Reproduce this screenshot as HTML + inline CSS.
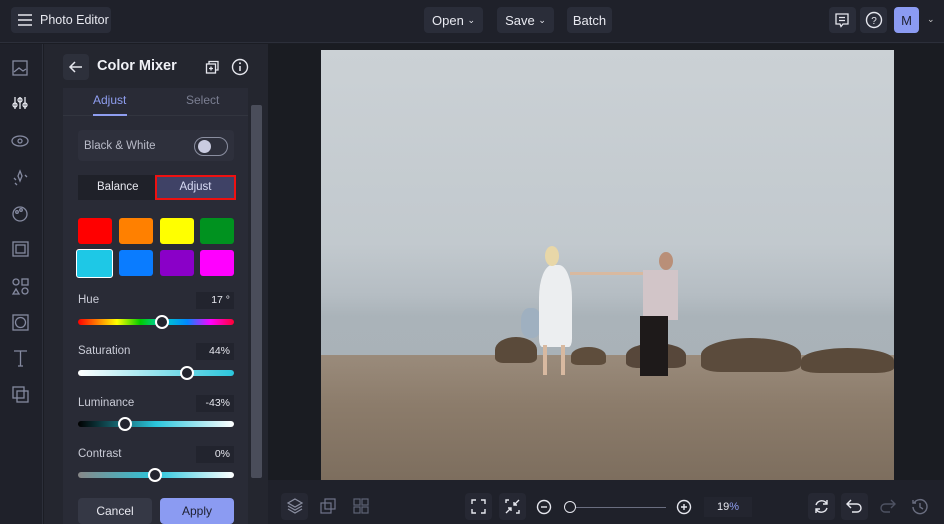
<!DOCTYPE html>
<html><head><style>
*{box-sizing:border-box;margin:0;padding:0}
body{width:944px;height:524px;overflow:hidden;background:#1b1d24;font-family:"Liberation Sans",sans-serif;color:#e6e7ee;position:relative}
.a{position:absolute}
.btn{position:absolute;background:#2a2d39;border-radius:4px;font-size:13px;color:#e8e9f0;display:flex;align-items:center;justify-content:center;white-space:nowrap}
.lbl{position:absolute;font-size:11.5px;color:#c9cbd6}
.val{position:absolute;left:196px;width:38px;height:17px;background:#22242e;font-size:10.5px;color:#e6e7ee;text-align:right;padding-right:4px;line-height:17px}
.sl{position:absolute;left:78px;width:156px;height:6px;border-radius:3px}
.th{position:absolute;width:14px;height:14px;border-radius:50%;background:#23252f;border:2px solid #fff}
.sw{position:absolute;width:34px;height:26px;border-radius:3px}
.rk{position:absolute;background:#5a4a3a;border-radius:50% 50% 20% 20%}
svg{position:absolute}
</style></head><body>
<!-- top bar -->
<div class="a" style="left:0;top:0;width:944px;height:43px;background:#1f212a;border-bottom:1px solid #2c2f3a"></div>
<div class="btn" style="left:11px;top:7px;width:100px;height:26px;justify-content:flex-start;padding-left:29px;font-size:12.5px">Photo Editor</div>
<svg style="left:17px;top:13px" width="16" height="14"><path d="M1 2H15M1 7H15M1 12H15" stroke="#e6e7ee" stroke-width="1.6"/></svg>
<div class="btn" style="left:424px;top:7px;width:59px;height:26px">Open&nbsp;<span style="font-size:9px">&#8964;</span></div>
<div class="btn" style="left:497px;top:7px;width:57px;height:26px">Save&nbsp;<span style="font-size:9px">&#8964;</span></div>
<div class="btn" style="left:567px;top:7px;width:45px;height:26px">Batch</div>
<div class="btn" style="left:829px;top:7px;width:27px;height:26px"></div>
<svg style="left:835px;top:13px" width="14" height="15"><path d="M1 1H13V11H8L6 13.5L5 11H1Z M4 4.5H10M4 7.5H10" fill="none" stroke="#e6e7ee" stroke-width="1.3"/></svg>
<div class="btn" style="left:860px;top:7px;width:27px;height:26px"></div>
<svg style="left:865px;top:11px" width="18" height="18"><circle cx="9" cy="9" r="7.5" fill="none" stroke="#e6e7ee" stroke-width="1.4"/><text x="9" y="13" font-size="10" text-anchor="middle" fill="#e6e7ee" font-family="Liberation Sans">?</text></svg>
<div class="btn" style="left:894px;top:7px;width:25px;height:26px;background:#8b9bf2;color:#1e2030;font-size:13px">M</div>
<div class="a" style="left:927px;top:14px;font-size:9px;color:#ccc">&#8964;</div>
<!-- left rail -->
<div class="a" style="left:0;top:44px;width:43px;height:480px;background:#1f212a;border-right:1px solid #2c2f3a"></div>
<svg style="left:11px;top:59px" width="20" height="350" fill="none" stroke="#858aa0" stroke-width="1.3">
<rect x="2" y="2" width="14" height="14"/><path d="M3 13L8 9L12 12L15 10"/>
<path d="M4 38V50M9 38V50M14 38V50" stroke="#e6e7ee"/><circle cx="4" cy="46" r="2" stroke="#e6e7ee"/><circle cx="9" cy="41" r="2" stroke="#e6e7ee"/><circle cx="14" cy="46" r="2" stroke="#e6e7ee"/>
<ellipse cx="9" cy="82" rx="8" ry="5"/><circle cx="9" cy="82" r="2"/>
<path d="M9 112L11 117L9 122L7 117Z M3 119L5 121 M14 116L16 118 M4 124L6 126"/>
<circle cx="9" cy="155" r="7"/><circle cx="6" cy="153" r="1.3"/><circle cx="10" cy="151" r="1.3"/>
<rect x="2" y="183" width="15" height="14"/><rect x="5" y="186" width="9" height="8"/>
<circle cx="5" cy="223" r="3"/><rect x="11" y="220" width="6" height="6"/><path d="M2 235L5 230L8 235Z"/><circle cx="14" cy="232" r="3"/>
<rect x="2" y="256" width="15" height="15"/><circle cx="9.5" cy="263.5" r="5"/>
<path d="M3 292H16M9.5 292V307M7 307H12"/>
<rect x="2" y="328" width="11" height="11"/><rect x="6" y="332" width="11" height="11"/>
</svg>
<!-- panel -->
<div class="a" style="left:44px;top:44px;width:224px;height:480px;background:#24262f"></div>
<div class="btn" style="left:63px;top:54px;width:26px;height:26px;background:#2d303b"></div>
<svg style="left:68px;top:60px" width="16" height="14"><path d="M14 7H2M7 2L2 7L7 12" fill="none" stroke="#e6e7ee" stroke-width="1.5"/></svg>
<div class="a" style="left:97px;top:58px;font-size:14.5px;font-weight:bold;color:#f0f1f6">Color Mixer</div>
<svg style="left:205px;top:59px" width="16" height="16" fill="none" stroke="#e6e7ee" stroke-width="1.3"><rect x="1.5" y="5" width="9" height="9"/><path d="M4 5V2.5H13V11H10.5"/><path d="M6 7.5V11.5M4 9.5H8"/></svg>
<svg style="left:231px;top:58px" width="18" height="18"><circle cx="9" cy="9" r="7.5" fill="none" stroke="#e6e7ee" stroke-width="1.4"/><path d="M9 8V13" stroke="#e6e7ee" stroke-width="1.5"/><circle cx="9" cy="5.3" r="1" fill="#e6e7ee"/></svg>
<div class="a" style="left:63px;top:88px;width:185px;height:436px;background:#292b36"></div>
<div class="a" style="left:63px;top:115px;width:185px;height:1px;background:#32353f"></div>
<div class="a" style="left:93px;top:93px;font-size:12px;color:#8f9ef0">Adjust</div>
<div class="a" style="left:93px;top:114px;width:34px;height:2px;background:#8f9ef0"></div>
<div class="a" style="left:186px;top:93px;font-size:12px;color:#7b7f92">Select</div>
<div class="a" style="left:78px;top:130px;width:156px;height:31px;background:#2e303c;border-radius:4px"></div>
<div class="a" style="left:84px;top:140px;font-size:11.5px;color:#b9bbc8">Black &amp; White</div>
<div class="a" style="left:194px;top:137px;width:34px;height:19px;border:1.5px solid #8a8ea0;border-radius:10px"></div>
<div class="a" style="left:198px;top:140px;width:13px;height:13px;background:#c9cbe0;border-radius:50%"></div>
<div class="a" style="left:78px;top:175px;width:158px;height:25px;background:#1f2129"></div>
<div class="a" style="left:97px;top:181px;font-size:11.5px;color:#e6e7ee">Balance</div>
<div class="a" style="left:155px;top:175px;width:81px;height:25px;background:#3f4266;border:2.5px solid #e11;font-size:11.5px;color:#d8dbf5;text-align:center;line-height:20px">Adjust</div>
<div class="sw" style="left:78px;top:218px;background:#f00"></div>
<div class="sw" style="left:119px;top:218px;background:#ff8000"></div>
<div class="sw" style="left:160px;top:218px;background:#ff0"></div>
<div class="sw" style="left:200px;top:218px;background:#00921f"></div>
<div class="sw" style="left:76px;top:249px;width:37px;height:29px;background:#1ec8e6;border:1px solid #fff"></div>
<div class="sw" style="left:119px;top:250px;background:#0a7cff"></div>
<div class="sw" style="left:160px;top:250px;background:#8a00c8"></div>
<div class="sw" style="left:200px;top:250px;background:#f0f"></div>
<div class="lbl" style="left:78px;top:294px">Hue</div><div class="val" style="top:292px">17 °</div>
<div class="sl" style="top:319px;background:linear-gradient(90deg,#f00,#ff0 25%,#0c0 40%,#0cc 55%,#08f 70%,#f0f 85%,#f03)"></div>
<div class="th" style="left:155px;top:315px"></div>
<div class="lbl" style="left:78px;top:345px">Saturation</div><div class="val" style="top:343px">44%</div>
<div class="sl" style="top:370px;background:linear-gradient(90deg,#fff,#2bc6dc)"></div>
<div class="th" style="left:180px;top:366px"></div>
<div class="lbl" style="left:78px;top:397px">Luminance</div><div class="val" style="top:395px">-43%</div>
<div class="sl" style="top:421px;background:linear-gradient(90deg,#000,#2bc6dc 50%,#fff)"></div>
<div class="th" style="left:118px;top:417px"></div>
<div class="lbl" style="left:78px;top:448px">Contrast</div><div class="val" style="top:446px">0%</div>
<div class="sl" style="top:472px;background:linear-gradient(90deg,#888,#2bc6dc 50%,#fff)"></div>
<div class="th" style="left:148px;top:468px"></div>
<div class="btn" style="left:78px;top:498px;width:74px;height:26px;background:#353845;font-size:12px">Cancel</div>
<div class="btn" style="left:160px;top:498px;width:74px;height:26px;background:#8b9bf2;color:#1e2030;font-size:12px">Apply</div>
<div class="a" style="left:251px;top:105px;width:11px;height:373px;background:#4a4d5a;border-radius:2px"></div>
<!-- canvas -->
<div class="a" style="left:268px;top:44px;width:676px;height:436px;background:#1a1c22"></div>
<div class="a" style="left:321px;top:50px;width:573px;height:430px;overflow:hidden;background:linear-gradient(180deg,#cbd1d5 0%,#c2c9ce 45%,#b5bdc3 57%,#aab3b9 62%,#a6b0b6 100%)">
<div class="a" style="left:0;top:305px;width:573px;height:125px;background:linear-gradient(180deg,#9a8b7b,#8c7c6b 40%,#7d6e5e 100%)"></div>
<div class="rk" style="left:174px;top:287px;width:42px;height:26px"></div>
<div class="rk" style="left:250px;top:297px;width:35px;height:18px;background:#5e4d3c"></div>
<div class="rk" style="left:305px;top:293px;width:60px;height:25px;background:#57473a"></div>
<div class="rk" style="left:380px;top:288px;width:100px;height:34px;background:#5b4b3c"></div>
<div class="rk" style="left:480px;top:298px;width:93px;height:25px"></div>
<div class="a" style="left:200px;top:258px;width:20px;height:30px;background:#9fb0c0;border-radius:40%"></div>
<div class="a" style="left:218px;top:215px;width:33px;height:82px;background:#eceef0;border-radius:40% 40% 10% 10%"></div>
<div class="a" style="left:222px;top:295px;width:4px;height:30px;background:#d8b9a0"></div>
<div class="a" style="left:240px;top:295px;width:4px;height:30px;background:#d8b9a0"></div>
<div class="a" style="left:224px;top:196px;width:14px;height:20px;background:#e8d7a8;border-radius:50%"></div>
<div class="a" style="left:249px;top:222px;width:73px;height:3px;background:#d8b9a0"></div>
<div class="a" style="left:322px;top:220px;width:35px;height:50px;background:#d2c5c8"></div>
<div class="a" style="left:338px;top:202px;width:14px;height:18px;background:#b98f78;border-radius:50%"></div>
<div class="a" style="left:319px;top:266px;width:28px;height:60px;background:#1e1a1a"></div>
</div>
<!-- bottom bar -->
<div class="a" style="left:268px;top:480px;width:676px;height:44px;background:#1f212a"></div>
<div class="btn" style="left:281px;top:493px;width:27px;height:27px;background:#262833"></div>
<svg style="left:287px;top:498px" width="16" height="16" fill="none" stroke="#8a8ea0" stroke-width="1.2"><path d="M8 1L15 5L8 9L1 5Z M1 8L8 12L15 8 M1 11L8 15L15 11"/></svg>
<svg style="left:320px;top:498px" width="16" height="16" fill="none" stroke="#70748a" stroke-width="1.2"><rect x="1" y="5" width="10" height="10"/><rect x="5" y="1" width="10" height="10"/></svg>
<svg style="left:353px;top:498px" width="16" height="16" fill="none" stroke="#5e6275" stroke-width="1.2"><rect x="1" y="1" width="6" height="6"/><rect x="9" y="1" width="6" height="6"/><rect x="1" y="9" width="6" height="6"/><rect x="9" y="9" width="6" height="6"/></svg>
<div class="btn" style="left:465px;top:493px;width:27px;height:27px;background:#262833"></div>
<svg style="left:471px;top:499px" width="15" height="15" fill="none" stroke="#e6e7ee" stroke-width="1.4"><path d="M1 5V1H5M10 1H14V5M14 10V14H10M5 14H1V10"/></svg>
<div class="btn" style="left:499px;top:493px;width:27px;height:27px;background:#262833"></div>
<svg style="left:505px;top:499px" width="15" height="15" fill="none" stroke="#e6e7ee" stroke-width="1.4"><path d="M1 4V1H4M14 1L9 6M9 3V6H12M1 14L6 9M3 9H6V12M11 14H14V11"/></svg>
<svg style="left:536px;top:499px" width="16" height="16" fill="none" stroke="#e6e7ee" stroke-width="1.4"><circle cx="8" cy="8" r="6.5"/><path d="M5 8H11"/></svg>
<div class="a" style="left:570px;top:507px;width:96px;height:1px;background:#6a6e80"></div>
<div class="a" style="left:564px;top:501px;width:12px;height:12px;border:1.5px solid #e6e7ee;border-radius:50%;background:#1f212a"></div>
<svg style="left:676px;top:499px" width="16" height="16" fill="none" stroke="#e6e7ee" stroke-width="1.4"><circle cx="8" cy="8" r="6.5"/><path d="M5 8H11M8 5V11"/></svg>
<div class="a" style="left:704px;top:497px;width:48px;height:20px;background:#23252f;font-size:11px;line-height:20px;text-align:center;color:#e6e7ee">19<span style="color:#8f9ef0">%</span></div>
<div class="btn" style="left:808px;top:493px;width:27px;height:27px;background:#262833"></div>
<svg style="left:813px;top:498px" width="17" height="17" fill="none" stroke="#e6e7ee" stroke-width="1.4"><path d="M3 7A6 6 0 0 1 14 6M14 10A6 6 0 0 1 3 11M14 2V6H10M3 15V11H7"/></svg>
<div class="btn" style="left:841px;top:493px;width:27px;height:27px;background:#262833"></div>
<svg style="left:846px;top:499px" width="17" height="15" fill="none" stroke="#e6e7ee" stroke-width="1.4"><path d="M5 1L1 5L5 9M1 5H11A4 4 0 0 1 11 13H6"/></svg>
<svg style="left:879px;top:499px" width="17" height="15" fill="none" stroke="#4e5262" stroke-width="1.4"><path d="M12 1L16 5L12 9M16 5H6A4 4 0 0 0 6 13H11"/></svg>
<svg style="left:911px;top:498px" width="17" height="17" fill="none" stroke="#6a6e80" stroke-width="1.4"><path d="M3 5A7 7 0 1 1 2 9M2 2V5H5M9 5V9L12 11"/></svg>
</body></html>
